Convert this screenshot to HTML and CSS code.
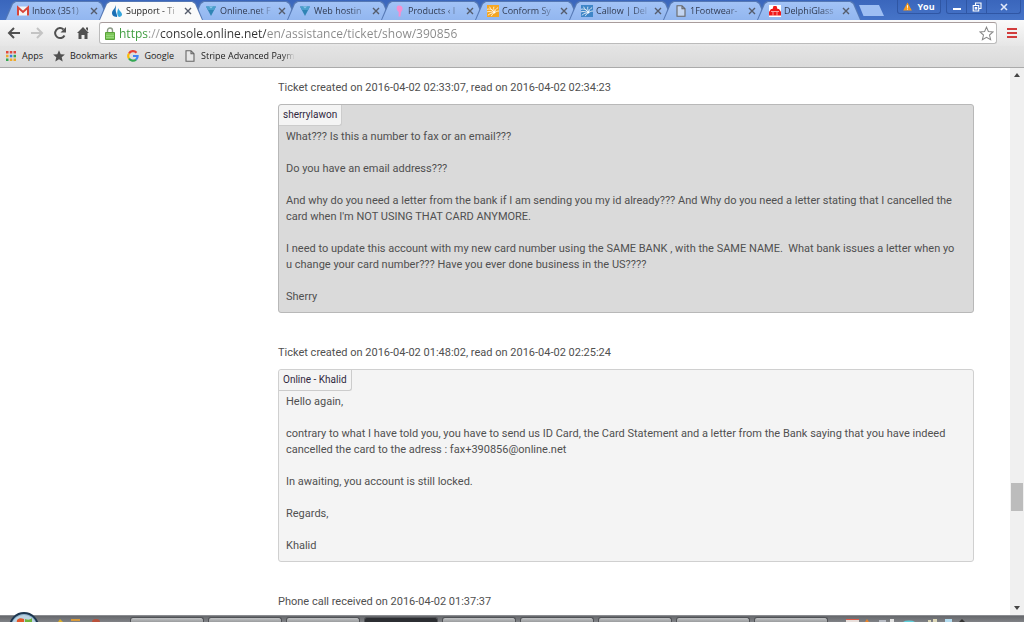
FILE: index.html
```
<!DOCTYPE html>
<html lang="en">
<head>
  <meta charset="UTF-8" />
  <meta name="viewport" content="width=device-width, initial-scale=1.0" />
  <title>Support - Ticket 390856</title>
  <link rel="stylesheet" href="styles.css">
</head>
<body>
  <svg class="defs" aria-hidden="true">
    <symbol id="close" viewBox="0 0 8 8"><path d="M1 1l6 6M7 1L1 7" stroke="currentColor" stroke-width="1.4" fill="none"/></symbol>
    <symbol id="page" viewBox="0 0 12 12"><path d="M2 .7h5l3 3v7.6H2zM7 .7v3h3" fill="#eee" fill-opacity=".5" stroke="#666" stroke-width="1.1"/></symbol>
    <symbol id="online" viewBox="0 0 12 12"><path d="M1 1.500h10L6 11z" fill="#2f84b4"/><path d="M1 1.500h10L9 5H3z" fill="#4a9fcc"/><path d="M4 1.500h4L6 3.500z" fill="#8cc8ea"/></symbol>
    <symbol id="burst" viewBox="0 0 14 14"><path d="M0 5c4-1 7 1 9 4M3 2c1 3 4 4 6 7M8 2c-1 3 1 5 1 7M13 3c-2 1-4 3-4 6M14 7c-2 0-4 1-5 2M0 8c3-1 6 0 9 1M1 12c2-2 5-3 8-3M5 13c1-2 2-3 4-4" stroke="#fff" stroke-width=".9" fill="none"/></symbol>
  </svg>

  <header class="browser">
    <div class="tabstrip">
      <div class="tabs">
        <div class="tab">
          <svg class="favicon" viewBox="0 0 12 12"><path d="M0 1.500h12v9H0z" fill="#f4f4f4"/><path d="M1 10.500V2.500l5 4.500 5-4.500v8" fill="none" stroke="#d8453a" stroke-width="2"/></svg>
          <a href="#">Inbox (351)</a>
          <button aria-label="Close tab"><svg><use href="#close"/></svg></button>
        </div>
        <div class="tab active">
          <svg class="favicon" viewBox="0 0 12 12"><path d="M4.500 0c1 3-.5 4 .5 7s1.500 4 1 5C2 12 0 9 1.500 6 2.500 4 4.500 3 4.500 0z" fill="#1b6fb5"/><path d="M7.500 3c0 3 3.500 3.500 3.500 6.500 0 1.500-1.500 2.500-3 2.500C5.500 10 6 6 7.500 3z" fill="#35a5dc"/></svg>
          <a href="#">Support - Ti</a>
          <button aria-label="Close tab"><svg><use href="#close"/></svg></button>
        </div>
        <div class="tab">
          <svg class="favicon"><use href="#online"/></svg>
          <a href="#">Online.net F</a>
          <button aria-label="Close tab"><svg><use href="#close"/></svg></button>
        </div>
        <div class="tab">
          <svg class="favicon"><use href="#online"/></svg>
          <a href="#">Web hostin</a>
          <button aria-label="Close tab"><svg><use href="#close"/></svg></button>
        </div>
        <div class="tab">
          <svg class="favicon" viewBox="0 0 12 12"><path d="M5 .5c3-.5 5 1 4.500 3.500C9.300 6 8 6.500 7.800 8l-.3 3.500H5.500L5.800 7C4 6 2.500 2 5 .5z" fill="#f58fd0"/></svg>
          <a href="#">Products ‹ I</a>
          <button aria-label="Close tab"><svg><use href="#close"/></svg></button>
        </div>
        <div class="tab">
          <svg class="favicon orange"><use href="#burst"/></svg>
          <a href="#">Conform Sy</a>
          <button aria-label="Close tab"><svg><use href="#close"/></svg></button>
        </div>
        <div class="tab">
          <svg class="favicon blue"><use href="#burst"/></svg>
          <a href="#">Callow | Del</a>
          <button aria-label="Close tab"><svg><use href="#close"/></svg></button>
        </div>
        <div class="tab">
          <svg class="favicon"><use href="#page"/></svg>
          <a href="#">1Footwear-</a>
          <button aria-label="Close tab"><svg><use href="#close"/></svg></button>
        </div>
        <div class="tab">
          <svg class="favicon" viewBox="0 0 12 12"><path d="M0 0h12v12H0z" fill="#fff"/><path d="M4.500 1h3l1 3h1.500l2 3v3.500H0V7l2-3h1.500z" fill="#f01818"/><path d="M2 6.500h8M4 7v3.500M8 7v3.500" stroke="#fff" stroke-width=".6"/></svg>
          <a href="#">DelphiGlass</a>
          <button aria-label="Close tab"><svg><use href="#close"/></svg></button>
        </div>
        <button class="new-tab" aria-label="New tab"></button>
      </div>
      <div class="window-controls">
        <button class="profile">
          <svg viewBox="0 0 10 10"><path d="M5 .5L9.800 9.500H.2z" fill="#f79a1c"/><path d="M5 3.500v3M5 7.300v1.200" stroke="#fff" stroke-width="1"/></svg>
          You
        </button>
        <div class="window-buttons">
          <button aria-label="Minimize"><svg viewBox="0 0 10 10"><path d="M1 6h8v2H1z" fill="#fff"/></svg></button>
          <button aria-label="Restore"><svg viewBox="0 0 10 10"><path d="M3.500 3V1H9v5.500H7M1.200 3.500h5.500V9H1.200zM3.300 5.500h1.400V7H3.300z" fill="none" stroke="#fff" stroke-width="1.100"/></svg></button>
          <button aria-label="Close"><svg viewBox="0 0 10 10"><path d="M2 2l6 6M8 2L2 8" stroke="#dfe8fa" stroke-width="1.600"/></svg></button>
        </div>
      </div>
    </div>

    <div class="toolbar">
      <button aria-label="Back"><svg viewBox="0 0 14 14"><path d="M13 7H2.500M7 2L2 7l5 5" fill="none" stroke="#505050" stroke-width="2"/></svg></button>
      <button aria-label="Forward"><svg viewBox="0 0 14 14"><path d="M1 7h10.500M7 2l5 5-5 5" fill="none" stroke="#c4c4c4" stroke-width="2"/></svg></button>
      <button aria-label="Reload"><svg viewBox="0 0 14 14"><path d="M11.500 9.500A5 5 0 1 1 10.500 3.400" fill="none" stroke="#505050" stroke-width="2"/><path d="M13 1v5.500H7.500z" fill="#505050"/></svg></button>
      <button aria-label="Home"><svg viewBox="0 0 14 14"><path d="M7 1l6 6h-1.500v6H8.500V9h-3v4h-3V7H1zM10 1.500h2V5l-2-2z" fill="#505050"/></svg></button>
      <div class="address">
        <svg class="lock" viewBox="0 0 10 13"><path d="M2.500 6V3.500a2.500 2.500 0 0 1 5 0V6" fill="none" stroke="#8c9a86" stroke-width="1.400"/><path d="M.5 5.500h9v7h-9z" fill="#7cc75a" stroke="#5aa23a"/><path d="M1 8.500h8M1 10.500h8" stroke="#a2dc86" stroke-width=".7"/></svg>
        <input type="text" aria-label="Address" value="https://console.online.net/en/assistance/ticket/show/390856">
        <button aria-label="Bookmark this page"><svg viewBox="0 0 16 16"><path d="M8 1.200l2 4.700 5 .4-3.800 3.300 1.200 5L8 12l-4.400 2.600 1.200-5L1 6.300l5-.4z" fill="#fff" stroke="#888" stroke-width="1.100"/></svg></button>
      </div>
      <button class="menu" aria-label="Menu"><svg viewBox="0 0 12 12"><path d="M1 2h10M1 6h10M1 10h10" stroke="#d23c3c" stroke-width="2"/></svg></button>
    </div>

    <nav class="bookmarks">
      <a href="#"><svg viewBox="0 0 12 12"><path d="M1 1h2.500v2.500H1zM4.800 1h2.500v2.500H4.800zM8.500 1H11v2.500H8.500z" fill="#e0483c"/><path d="M1 4.800h2.500v2.500H1zM8.500 8.500H11V11H8.500zM4.800 8.500h2.500V11H4.800z" fill="#efa92a"/><path d="M1 8.500h2.500V11H1z" fill="#35a853"/><path d="M4.800 4.800h2.500v2.500H4.800z" fill="#3a7be0"/><path d="M8.500 4.800H11v2.500H8.500z" fill="#35a853"/></svg>Apps</a>
      <a href="#"><svg viewBox="0 0 12 12"><path d="M6 .3l1.700 3.900 4.200.3-3.200 2.800 1 4.200L6 9.300l-3.700 2.200 1-4.200L.1 4.500l4.200-.3z" fill="#505050"/></svg>Bookmarks</a>
      <a href="#"><svg viewBox="0 0 12 12"><g fill="none" stroke-width="2.200"><path d="M9.500 2.700A4.700 4.700 0 0 0 2 3.500" stroke="#e94235"/><path d="M2 3.500a4.700 4.700 0 0 0 0 5" stroke="#fabb05"/><path d="M2 8.500a4.700 4.700 0 0 0 7 1.100" stroke="#34a853"/><path d="M9 9.600A4.500 4.500 0 0 0 10.600 6H6" stroke="#4285f4"/></g></svg>Google</a>
      <a href="#" class="long"><svg><use href="#page"/></svg><span>Stripe Advanced Paym</span></a>
    </nav>
  </header>

  <div class="viewport">
    <main class="tickets">
      <section class="ticket">
        <h2>Ticket created on 2016-04-02 02:33:07, read on 2016-04-02 02:34:23</h2>
        <article class="message customer">
          <span class="author">sherrylawon</span>
          <div class="text">
            <p>What??? Is this a number to fax or an email???</p>
            <p>Do you have an email address???</p>
            <p>And why do you need a letter from the bank if I am sending you my id already??? And Why do you need a letter stating that I cancelled the<br>card when I'm NOT USING THAT CARD ANYMORE.</p>
            <p>I need to update this account with my new card number using the SAME BANK , with the SAME NAME.&nbsp; What bank issues a letter when yo<br>u change your card number??? Have you ever done business in the US????</p>
            <p>Sherry</p>
          </div>
        </article>
      </section>

      <section class="ticket">
        <h2>Ticket created on 2016-04-02 01:48:02, read on 2016-04-02 02:25:24</h2>
        <article class="message">
          <span class="author">Online - Khalid</span>
          <div class="text">
            <p>Hello again,</p>
            <p>contrary to what I have told you, you have to send us ID Card, the Card Statement and a letter from the Bank saying that you have indeed<br>cancelled the card to the adress : fax+390856@online.net</p>
            <p>In awaiting, you account is still locked.</p>
            <p>Regards,</p>
            <p>Khalid</p>
          </div>
        </article>
      </section>

      <section class="ticket">
        <h2>Phone call received on 2016-04-02 01:37:37</h2>
      </section>
    </main>
    <div class="scrollbar">
      <button aria-label="Scroll up"><svg viewBox="0 0 6 4"><path d="M0 4l3-4 3 4z" fill="#444"/></svg></button>
      <div class="track"><div class="thumb"></div></div>
      <button aria-label="Scroll down"><svg viewBox="0 0 6 4"><path d="M0 0h6L3 4z" fill="#444"/></svg></button>
    </div>
  </div>

  <footer class="taskbar">
    <button class="start" aria-label="Start"><svg viewBox="0 0 30 30"><circle cx="15" cy="15" r="15" fill="#1d3650"/><circle cx="15" cy="15" r="13" fill="#8fb3cc"/><path d="M3 12a12.500 12.500 0 0 1 24 0z" fill="#bcd3e2"/><path d="M8 8c2-2 4-2 7-1v8H7z" fill="#e2572b"/><path d="M16 7c3 1 5 1 7-1v9h-7z" fill="#6fb43c"/></svg></button>
    <div class="quick">
      <svg viewBox="0 0 50 3"><path d="M4 3l2-3 3 3z" fill="#dcae2a"/><path d="M17 0h9v2h-9z" fill="#d99b3a"/><path d="M38 3a4 3 0 0 1 8 0z" fill="#b9513c"/></svg>
    </div>
    <div class="tasks">
      <button aria-label="Window 1"></button>
      <button aria-label="Window 2"></button>
      <button aria-label="Window 3"></button>
      <button class="current" aria-label="Browser"></button>
      <button aria-label="Window 5"></button>
      <button aria-label="Window 6"></button>
      <button aria-label="Window 7"></button>
      <button aria-label="Window 8"></button>
      <button aria-label="Window 9"></button>
    </div>
    <div class="tray">
      <svg viewBox="0 0 130 3"><path d="M0 0h13v1H0z" fill="#e05a48"/><path d="M0 1h13v2H0z" fill="#e8e0dc"/><path d="M19 3l2-3 2 3z" fill="#e8842c"/><path d="M33 1h7v2h-7z" fill="#b8bcc4"/><path d="M44 0h4v3h-4z" fill="#e4e4e4"/><path d="M57 3a7 3 0 0 1 12 0z" fill="#5ed0dc"/><path d="M82 1h3v2h-3zM87 0h4v3h-4z" fill="#ddd8b8"/><path d="M99 0h7v3h-7z" fill="#b4dcf0"/><path d="M113 3l3-3 3 3z" fill="#333"/></svg>
    </div>
  </footer>
</body>
</html>
```
FILE: styles.css
```
* {
  box-sizing: border-box;
}
body {
  margin: 0;
  height: 100vh;
  display: flex;
  flex-direction: column;
  overflow: hidden;
  background: #fff;
  font-family: "Open Sans", "Noto Sans", sans-serif;
  color: #505050;
}
button {
  display: flex;
  align-items: center;
  justify-content: center;
  padding: 0;
  border: 0;
  background: none;
  font: inherit;
  color: inherit;
}
a {
  color: inherit;
  text-decoration: none;
}
svg {
  display: block;
  flex: none;
}
.defs {
  display: none;
}

/* tabs */
.tabstrip {
  display: flex;
  justify-content: space-between;
  height: 20px;
  background: linear-gradient(#3a66bc, #4674c8);
}
.tabs {
  display: flex;
  flex: 1;
  min-width: 0;
  padding: 1px 0 0 5px;
}
.tab {
  position: relative;
  z-index: 0;
  flex: 0 1 104px;
  min-width: 0;
  display: flex;
  align-items: center;
  margin-right: -10px;
  padding: 0 8px 0 12px;
  font-size: 9px;
  color: #303a50;
}
.tab::before,
.tab::after {
  content: "";
  position: absolute;
  z-index: -1;
  inset: 0;
  background: #5578b4;
  clip-path: polygon(0 100%, 7px 2px, 10px 0, calc(100% - 10px) 0, calc(100% - 7px) 2px, 100% 100%);
}
.tab::after {
  inset: 1px 1px 0;
  background: linear-gradient(#a2c3f6, #92b6ef);
}
.tab.active {
  z-index: 1;
  color: #222;
}
.tab.active::after {
  background: #fafafa;
}
.favicon {
  width: 12px;
  height: 12px;
  margin-right: 3px;
}
.favicon.orange {
  background: #f5a623;
}
.favicon.blue {
  background: #3f86c8;
}
.tab a {
  flex: 1;
  min-width: 0;
  white-space: nowrap;
  mask-image: linear-gradient(to right, #000 66%, transparent);
}
.tab button {
  width: 14px;
  height: 14px;
  color: #555c6c;
}
.tab button svg {
  width: 8px;
  height: 8px;
}
.new-tab {
  width: 25px;
  height: 11px;
  margin: 4px 0 0 8px;
  background: #9dbef3;
  clip-path: polygon(0 0, 80% 0, 100% 100%, 18% 100%);
}
.window-controls {
  display: flex;
  gap: 5px;
  height: 14px;
  padding-right: 3px;
  color: #fff;
}
.profile {
  gap: 5px;
  width: 44px;
  border: 1px solid #2f56a4;
  border-top: 0;
  border-radius: 0 0 3px 3px;
  font-size: 9px;
  font-weight: bold;
}
.profile svg {
  width: 9px;
  height: 9px;
}
.window-buttons {
  display: flex;
  border: 1px solid #2f56a4;
  border-top: 0;
  border-radius: 0 0 3px 3px;
}
.window-buttons button {
  width: 20px;
  border-right: 1px solid #2f56a4;
}
.window-buttons button:last-child {
  width: 33px;
  border-right: 0;
}
.window-buttons svg {
  width: 10px;
  height: 10px;
}

/* toolbar */
.toolbar {
  display: flex;
  align-items: center;
  gap: 9px;
  height: 26px;
  padding: 2px 6px 2px 7px;
  background: linear-gradient(#fafafa, #e6e6e6);
}
.toolbar > button svg {
  width: 14px;
  height: 14px;
}
.toolbar .menu svg {
  width: 12px;
  height: 12px;
}
.address {
  flex: 1;
  display: flex;
  align-items: center;
  gap: 4px;
  height: 22px;
  padding: 0 2px 0 5px;
  border: 1px solid #bbb;
  border-top-color: #a89c9c;
  border-radius: 3px;
  background: #fff;
}
.address .lock {
  width: 10px;
  height: 13px;
}
.address input {
  flex: 1;
  min-width: 0;
  padding: 0;
  border: 0;
  outline: 0;
  font: 12px "Open Sans", "Noto Sans", sans-serif;
  color: transparent;
  background: linear-gradient(to right, #3a9a3a 30px, #999 30px 41px, #333 41px 147px, #888 147px);
  -webkit-background-clip: text;
  background-clip: text;
}
.address svg {
  width: 15px;
  height: 15px;
}

/* bookmarks */
.bookmarks {
  display: flex;
  align-items: center;
  gap: 10px;
  height: 22px;
  padding: 0 5px 2px;
  border-bottom: 1px solid #aaa;
  background: linear-gradient(#e4e4e4, #dadada);
  font-size: 9px;
  color: #222;
}
.bookmarks a {
  display: flex;
  align-items: center;
  gap: 5px;
}
.bookmarks svg {
  width: 12px;
  height: 12px;
}
.bookmarks .long span {
  white-space: nowrap;
  mask-image: linear-gradient(to right, #000 86%, transparent);
}

/* page */
.viewport {
  flex: 1;
  min-height: 0;
  display: flex;
}
.tickets {
  flex: 1;
  overflow: hidden;
  padding: 12px 36px 0 278px;
  font-family: Roboto, "Liberation Sans", sans-serif;
  font-size: 11px;
  line-height: 16px;
}
.ticket {
  margin-bottom: 32px;
}
.ticket h2 {
  margin: 0 0 8px;
  font-size: inherit;
  font-weight: normal;
}
.message {
  border: 1px solid #d0d0d0;
  border-radius: 3px;
  background: #f4f4f4;
}
.message.customer {
  border-color: #b8b8b8;
  background: #dadada;
}
.author {
  display: block;
  width: fit-content;
  padding: 2px 4px;
  border-right: 1px solid #ccc;
  border-bottom: 1px solid #ccc;
  border-radius: 3px 0 3px 0;
  background: #f4f4f4;
  font-size: 10px;
  color: #302840;
}
.text {
  padding: 3px 7px 7px;
  white-space: nowrap;
}
.text p {
  margin: 0 0 16px;
}
.text p:last-child {
  margin-bottom: 0;
}
.scrollbar {
  display: flex;
  flex-direction: column;
  width: 14px;
  background: #f0f0f0;
}
.scrollbar button {
  height: 14px;
}
.scrollbar svg {
  width: 6px;
  height: 4px;
}
.track {
  flex: 1;
  display: flex;
  flex-direction: column;
  justify-content: flex-end;
  padding: 0 1px 90px;
}
.thumb {
  height: 28px;
  background: #bcbcbc;
}

/* taskbar */
.taskbar {
  position: relative;
  display: flex;
  align-items: flex-end;
  height: 7px;
  border-top: 1px solid #8a8c90;
  background: linear-gradient(#66686c, #808286);
}
.start {
  position: absolute;
  left: 9px;
  top: -4px;
}
.start svg {
  width: 30px;
  height: 30px;
}
.quick {
  margin-left: 54px;
  width: 76px;
}
.quick svg {
  width: 50px;
  height: 3px;
}
.tasks {
  display: flex;
  gap: 4px;
}
.tasks button {
  width: 74px;
  height: 5px;
  border: 1px solid #505256;
  border-bottom: 0;
  border-radius: 3px 3px 0 0;
  background: linear-gradient(#c0c2c4, #9a9c9e);
}
.tasks .current {
  background: #2c2e32;
}
.tray {
  margin-left: 18px;
}
.tray svg {
  width: 130px;
  height: 3px;
}
```
